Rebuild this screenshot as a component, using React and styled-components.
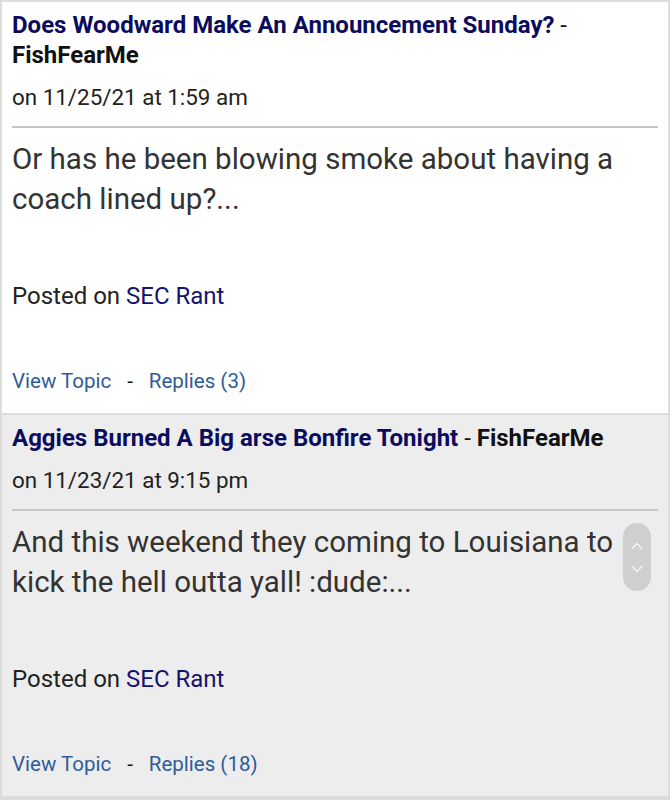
import styled, { createGlobalStyle } from "styled-components";

const GlobalStyle = createGlobalStyle`
  html, body {
    margin: 0;
    padding: 0;
    background: #dcdcdc;
  }
  body {
    font-family: Roboto, "Noto Sans", "Liberation Sans", sans-serif;
  }
`;

const Page = styled.div`
  width: 670px;
  box-sizing: border-box;
  padding: 0 2px 2px 2px;
  background: #dcdcdc;
  display: flex;
  flex-direction: column;
`;

const Card = styled.div`
  position: relative;
  border-top: 2px solid #dcdcdc;
  background: ${(p) => (p.$shaded ? "#ededed" : "#ffffff")};
  padding: 8px 10px 17px 10px;
  display: flex;
  flex-direction: column;
`;

const Heading = styled.div`
  font-size: 24px;
  line-height: 30px;
  color: #111;
`;

const TopicLink = styled.a`
  color: #0c0c5e;
  font-weight: 700;
  text-decoration: none;
`;

const Author = styled.span`
  font-weight: 700;
  color: #111;
`;

const Stamp = styled.div`
  margin-top: 12px;
  font-size: 22.4px;
  line-height: 30px;
  color: #222;
`;

const Rule = styled.hr`
  margin: 14px 0 0 0;
  border: none;
  height: 2px;
  background: #c6c6c6;
`;

const Excerpt = styled.div`
  margin-top: 11px;
  font-size: 29.5px;
  line-height: 40px;
  color: #333;
  padding-right: 30px;
`;

const Posted = styled.div`
  margin-top: 62px;
  font-size: 24px;
  line-height: 30px;
  color: #222;
`;

const Board = styled.a`
  color: #14146e;
  text-decoration: none;
`;

const Actions = styled.div`
  margin-top: 55px;
  display: flex;
  align-items: center;
  gap: 16px;
  font-size: 20.5px;
  line-height: 30px;
  color: #111;
`;

const ActionLink = styled.a`
  color: #2e5c9a;
  text-decoration: none;
`;

const ScrollPill = styled.div`
  position: absolute;
  right: 17px;
  top: 108px;
  width: 28px;
  height: 68px;
  border-radius: 14px;
  background: #cfcfcf;
  display: flex;
  flex-direction: column;
  align-items: center;
  justify-content: center;
  gap: 15px;
`;

const Chevron = ({ up }) => (
  <svg width="12" height="8" viewBox="0 0 12 8">
    <path
      d={up ? "M1 6.5 L6 1.5 L11 6.5" : "M1 1.5 L6 6.5 L11 1.5"}
      fill="none"
      stroke="#f4f4f4"
      strokeWidth="1.4"
      strokeLinecap="round"
    />
  </svg>
);

const posts = [
  {
    title: "Does Woodward Make An Announcement Sunday?",
    author: "FishFearMe",
    date: "on 11/25/21 at 1:59 am",
    text: "Or has he been blowing smoke about having a coach lined up?...",
    board: "SEC Rant",
    replies: 3,
  },
  {
    title: "Aggies Burned A Big arse Bonfire Tonight",
    author: "FishFearMe",
    date: "on 11/23/21 at 9:15 pm",
    text: "And this weekend they coming to Louisiana to kick the hell outta yall! :dude:...",
    board: "SEC Rant",
    replies: 18,
    scroll: true,
  },
];

export default function App() {
  return (
    <>
      <GlobalStyle />
      <Page>
        {posts.map((p, i) => (
          <Card key={i} $shaded={i % 2 === 1}>
            <Heading>
              <TopicLink href="#">{p.title}</TopicLink> - <Author>{p.author}</Author>
            </Heading>
            <Stamp>{p.date}</Stamp>
            <Rule />
            <Excerpt>{p.text}</Excerpt>
            <Posted>
              Posted on <Board href="#">{p.board}</Board>
            </Posted>
            <Actions>
              <ActionLink href="#">View Topic</ActionLink>
              <span>-</span>
              <ActionLink href="#">Replies ({p.replies})</ActionLink>
            </Actions>
            {p.scroll && (
              <ScrollPill>
                <Chevron up />
                <Chevron />
              </ScrollPill>
            )}
          </Card>
        ))}
      </Page>
    </>
  );
}
